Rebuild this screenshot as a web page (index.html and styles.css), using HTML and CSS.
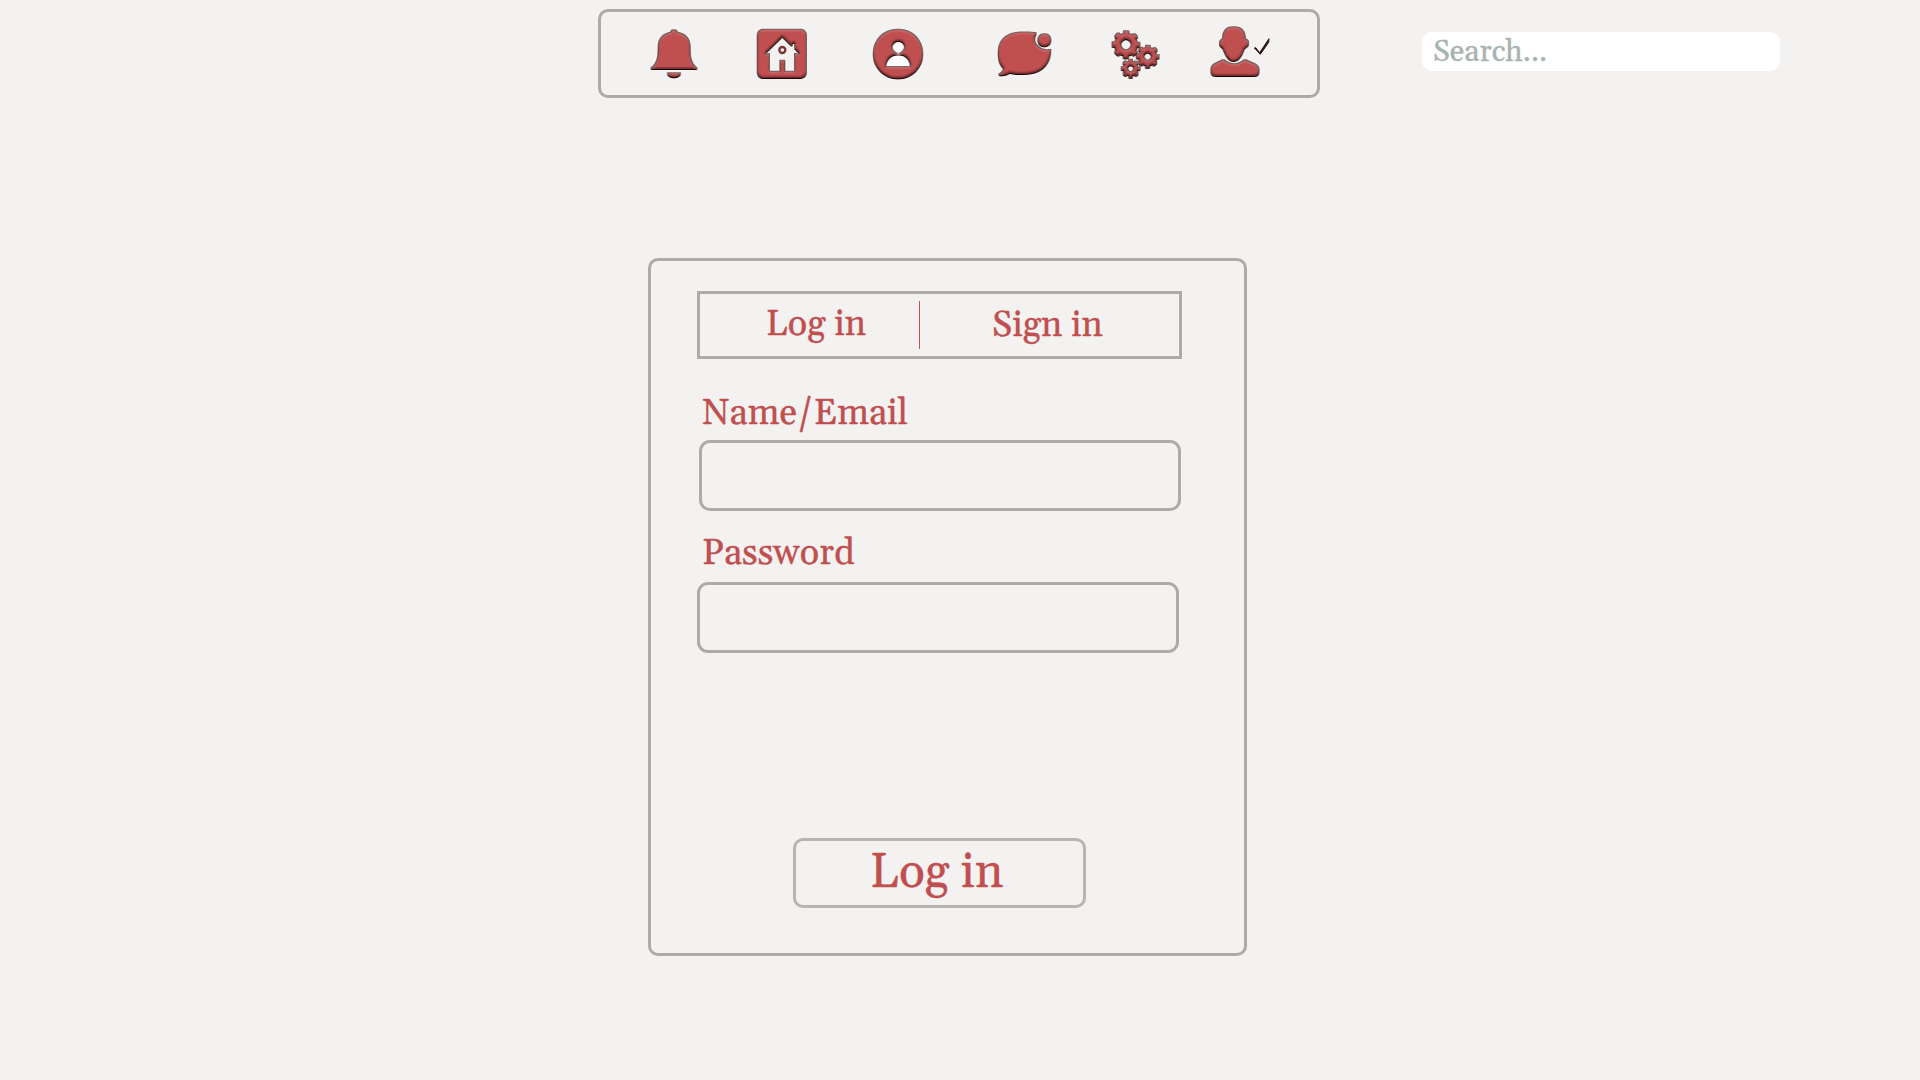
FILE: index.html
```html
<!DOCTYPE html>
<html lang="en">
<head>
<meta charset="utf-8">
<title>Log in</title>
<link rel="stylesheet" href="styles.css">
</head>
<body>
<svg class="defs" width="0" height="0" aria-hidden="true">
  <defs>
    <filter id="bevel" x="-10%" y="-10%" width="120%" height="120%" color-interpolation-filters="sRGB">
      <feMorphology in="SourceAlpha" operator="dilate" radius="1.5" result="fat"/>
      <feFlood flood-color="#4a3030" flood-opacity=".75"/>
      <feComposite in2="fat" operator="in" result="rim"/>
      <feOffset in="SourceAlpha" dx=".7" dy="1.8" result="low"/>
      <feFlood flood-color="#140606"/>
      <feComposite in2="low" operator="in" result="base"/>
      <feOffset in="SourceAlpha" dx="-1.2" dy="-3.500"/>
      <feGaussianBlur stdDeviation="3.2" result="up"/>
      <feComposite in="SourceAlpha" in2="up" operator="out" result="dk"/>
      <feFlood flood-color="#3a0c0e" flood-opacity=".9"/>
      <feComposite in2="dk" operator="in" result="shade"/>
      <feOffset in="SourceAlpha" dx="1" dy="3.500"/>
      <feGaussianBlur stdDeviation="2.4" result="dn"/>
      <feComposite in="SourceAlpha" in2="dn" operator="out" result="lt"/>
      <feFlood flood-color="#dc9a9a" flood-opacity=".6"/>
      <feComposite in2="lt" operator="in" result="shine"/>
      <feMerge>
        <feMergeNode in="rim"/><feMergeNode in="base"/><feMergeNode in="SourceGraphic"/>
        <feMergeNode in="shade"/><feMergeNode in="shine"/>
      </feMerge>
    </filter>
  </defs>
</svg>

<header class="header">
  <nav class="nav">
    <svg class="icon icon-bell" viewBox="177 78 150 162">
      <g filter="url(#bevel)">
        <path d="M252 91c-5 0-7 3-9 7-22 4-36 19-37 42-1 26 2 48-23 67h138c-24-19-21-41-22-67-1-23-14-38-38-42-2-4-4-7-9-7z"/>
        <path d="M233 220h38c-3 8-10 12-19 12s-16-4-19-12z"/>
      </g>
    </svg>
    <svg class="icon icon-home" viewBox="498 78 156 162">
      <path filter="url(#bevel)" fill-rule="evenodd" d="M523 89h104c14 0 21 8 21 21v103c0 14-8 21-21 21H523c-14 0-20-8-20-21V110c0-14 8-21 20-21zM577 109l-52 50 3 7 9-5v54h34v-33h12v33h32v-54l11 5 3-7-14-14v-17h-9v9z"/>
      <circle class="window" cx="577" cy="150" r="9"/>
    </svg>
    <svg class="icon icon-person" viewBox="66 78 156 162">
      <circle class="white" cx="144" cy="162" r="60"/>
      <path filter="url(#bevel)" fill-rule="evenodd" d="M144 89a73 73 0 1 1 0 146a73 73 0 1 1 0-146zM145 122a20 20 0 1 0 0 40a20 20 0 1 0 0-40zM106 201h77c-1-24-15-38-38-38s-38 14-39 38z"/>
    </svg>
    <svg class="icon icon-chat" viewBox="441 78 165 162">
      <g filter="url(#bevel)">
        <path d="M557 99c-20-2-52-4-73 4-25 10-38 29-38 56 0 20 4 35 16 45 1 8-6 17-16 21 15 2 26-3 33-7 23 6 62 6 83-4 25-12 39-35 39-65-22 8-53-11-48-35 1-6 3-10 4-15z"/>
        <circle cx="583" cy="121" r="18"/>
      </g>
    </svg>
    <svg class="icon icon-gears" viewBox="63 78 147 162">
      <g class="gears" filter="url(#bevel)">
        <circle cx="108" cy="134" r="25" stroke-width="16"/>
        <circle class="teeth" cx="108" cy="134" r="36" stroke-width="9" pathLength="16"/>
        <circle cx="173" cy="170" r="19.500" stroke-width="14"/>
        <circle class="teeth" cx="173" cy="170" r="29" stroke-width="8" pathLength="16"/>
        <circle cx="122" cy="206" r="15.500" stroke-width="11"/>
        <circle class="teeth" cx="122" cy="206" r="23.500" stroke-width="7" pathLength="16"/>
      </g>
    </svg>
    <svg class="icon icon-user" viewBox="360 78 180 162">
      <g filter="url(#bevel)">
        <path d="M431 82c-21 0-32 14-32 36-7 4-10 9-9 16 2 5 7 8 10 11 5 15 15 38 31 38s26-23 31-38c4-3 9-6 12-11 2-7-1-12-9-16 0-22-12-36-34-36z"/>
        <path d="M400 180c-12 8-35 11-36 31 0 13 5 17 14 17h114c9 0 14-4 14-17-1-20-29-23-41-31-8 7-19 13-32 13s-26-6-33-13z"/>
      </g>
      <path class="check" d="M493 144l4-1 12 15 28-42-1 11-25 36z"/>
    </svg>
  </nav>
  <div class="search"><span class="text">Search...</span></div>
</header>

<main class="card">
  <div class="tabs">
    <div class="tab tab-login"><span class="text">Log in</span></div>
    <div class="divider"></div>
    <div class="tab tab-signin"><span class="text">Sign in</span></div>
  </div>
  <label class="label label-name"><span class="text">Name/Email</span></label>
  <div class="field field-name"></div>
  <label class="label label-password"><span class="text">Password</span></label>
  <div class="field field-password"></div>
  <div class="submit"><span class="text">Log in</span></div>
</main>
</body>
</html>
```
FILE: styles.css
```css
* { box-sizing: border-box; }
body {
  margin: 0;
  height: 1080px;
  overflow: hidden;
  background: #f3f2f0;
  color: #c04f50;
  font-family: Gelasio, Georgia, "Liberation Serif", serif;
  font-size: 36px;
  line-height: 40px;
}
.defs { display: block; height: 0; }
.text { white-space: nowrap; -webkit-text-stroke: .3px currentColor; }

.header {
  display: flex;
  align-items: flex-start;
  height: 98px;
  padding: 9px 0 0 598px;
}
.nav {
  display: flex;
  width: 722px;
  height: 89px;
  padding: 14px 0 0 48px;
  border: 3px solid #acaba9;
  border-radius: 10px;
}
.icon { display: block; flex: none; height: 54px; fill: #c04f50; overflow: visible; }
.icon-bell { width: 50px; }
.icon-home { width: 52px; margin-left: 57px; }
.icon-person { width: 52px; margin-left: 64px; }
.icon-chat { width: 55px; margin-left: 73px; }
.icon-gears { width: 49px; margin-left: 59px; }
.icon-user { width: 60px; margin-left: 50px; }
.gears circle { fill: none; stroke: #c04f50; }
.gears .teeth { stroke-dasharray: .95 1.05; stroke-dashoffset: .475; }
.window { fill: #f3f2f0; stroke: #7d3434; stroke-width: 7; }
.white { fill: #fff; }
.check { fill: #2b1416; stroke: #2b1416; stroke-width: 3; }

.search {
  width: 358px;
  height: 39px;
  margin: 23px 0 0 102px;
  padding: 1px 0 0 11px;
  border-radius: 10px;
  background: #fff;
  color: #a9b3af;
  font-size: 30px;
  line-height: 38px;
}

.card {
  display: flex;
  flex-direction: column;
  align-items: flex-start;
  width: 599px;
  height: 698px;
  margin: 160px 0 0 648px;
  padding: 30px 0 0 46px;
  border: 3px solid #acaba9;
  border-radius: 10px;
}
.tabs {
  display: flex;
  width: 485px;
  height: 68px;
  border: 3px solid #acaba9;
}
.tab-login { width: 219px; padding: 11px 0 0 66px; }
.tab-signin { padding: 12px 0 0 72px; }
.divider { width: 1px; height: 48px; margin-top: 7px; background: #c04f50; }
.label { height: 40px; margin-left: 5px; }
.label-name { margin-top: 35px; }
.label-password { margin-top: 23px; }
.field { width: 482px; height: 71px; border: 3px solid #acaba9; border-radius: 11px; }
.field-name { margin: 6px 0 0 2px; }
.field-password { margin-top: 8px; }
.submit {
  width: 293px;
  height: 70px;
  margin: 185px 0 0 96px;
  padding: 2px 0 0 74px;
  border: 3px solid #b6b5b2;
  border-radius: 10px;
  font-size: 48px;
  line-height: 60px;
}
```
